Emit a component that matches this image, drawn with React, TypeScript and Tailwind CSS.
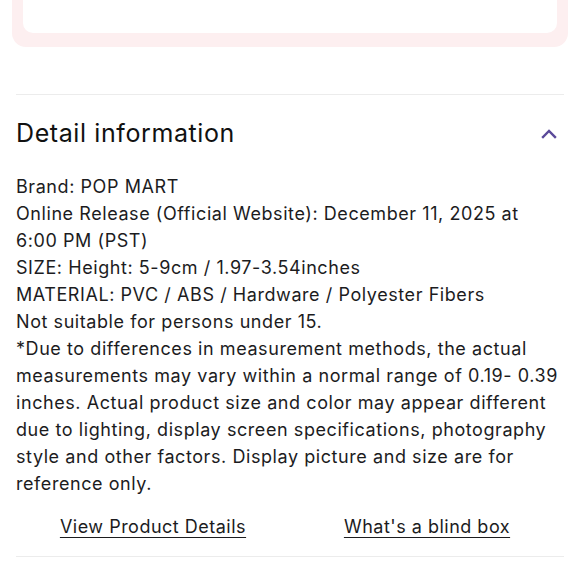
import React from "react";

export default function App() {
  const lines = [
    "Brand: POP MART",
    "Online Release (Official Website): December 11, 2025 at",
    "6:00 PM (PST)",
    "SIZE: Height: 5-9cm / 1.97-3.54inches",
    "MATERIAL: PVC / ABS / Hardware / Polyester Fibers",
    "Not suitable for persons under 15.",
    "*Due to differences in measurement methods, the actual",
    "measurements may vary within a normal range of 0.19- 0.39",
    "inches. Actual product size and color may appear different",
    "due to lighting, display screen specifications, photography",
    "style and other factors. Display picture and size are for",
    "reference only.",
  ];
  return (
    <div
      className="w-[580px] h-[580px] overflow-hidden bg-white text-[#1c1c1e]"
      style={{ fontFamily: "Inter, 'Noto Sans', sans-serif" }}
    >
      <div className="mx-[12px] mt-[-60px] h-[107px] rounded-[14px] bg-[#fdeff0] px-[11px] pt-[11px] pb-[14px]">
        <div className="h-full rounded-[10px] bg-white" />
      </div>
      <div className="mt-[47px] mx-[16px] h-px bg-[#ececec]" />
      <div className="mx-[16px] mt-[22px] flex items-center justify-between">
        <div className="text-[25px] leading-[33px] tracking-[0.6px] text-[#111]">Detail information</div>
        <svg width="16" height="12" viewBox="0 0 16 12" className="mr-[7px]">
          <path d="M2 9 L8 3 L14 9" fill="none" stroke="#5b4a9a" strokeWidth="2.4" strokeLinecap="square" />
        </svg>
      </div>
      <div className="mx-[16px] mt-[23px] text-[18px] leading-[27px] tracking-[0.57px] text-[#1c1c1e]">
        {lines.map((l, i) => (
          <div key={i} className="whitespace-nowrap">{l}</div>
        ))}
      </div>
      <div className="mx-[16px] mt-[16px] grid grid-cols-2 text-center text-[18px] leading-[27px] tracking-[0.5px]">
        <div>
          <span className="underline underline-offset-[4px]">View Product Details</span>
        </div>
        <div>
          <span className="underline underline-offset-[4px]">What's a blind box</span>
        </div>
      </div>
      <div className="mt-[16px] mx-[16px] h-px bg-[#ececec]" />
    </div>
  );
}
